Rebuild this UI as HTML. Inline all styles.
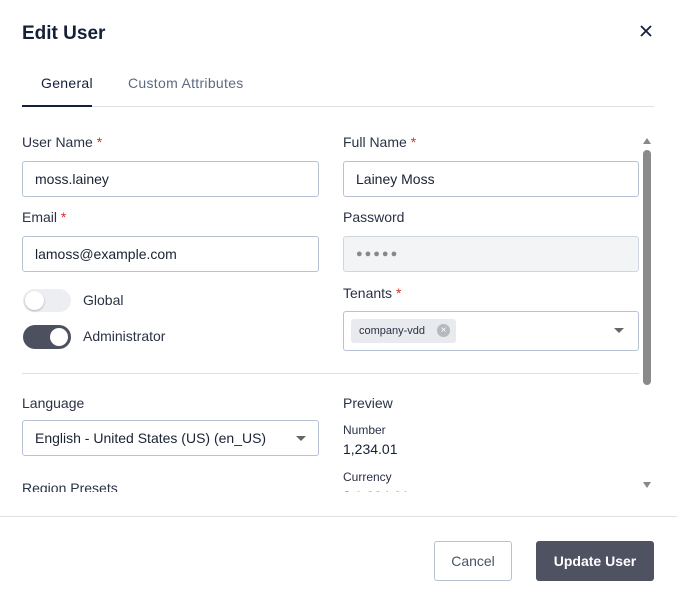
<!DOCTYPE html>
<html><head><style>
*{box-sizing:border-box;margin:0;padding:0}
body{width:677px;height:602px;background:#fff;font-family:"Liberation Sans",sans-serif;color:#1a2233;position:relative;overflow:hidden}
.a{position:absolute}
.lbl{font-size:14px;color:#2a3245}
.req{color:#d32f2f}
.inp{position:absolute;height:36px;border:1px solid #b7c3d3;border-radius:3px;font-size:14px;padding:0 12px;line-height:34px;color:#1a2233;background:#fff}
.caret{position:absolute;width:0;height:0;border-left:5px solid transparent;border-right:5px solid transparent;border-top:5px solid #666}
</style></head><body>
<div class="a" style="left:22px;top:23px;font-size:19px;font-weight:bold;color:#14203a">Edit User</div>
<svg class="a" style="left:640px;top:25px" width="12" height="12" viewBox="0 0 12 12"><path d="M1 1L11 11M11 1L1 11" stroke="#14203a" stroke-width="1.8"/></svg>
<div class="a" style="left:41px;top:75px;font-size:14px;color:#14203a;letter-spacing:0.3px">General</div>
<div class="a" style="left:128px;top:75px;font-size:14px;color:#5d6b80;letter-spacing:0.3px">Custom Attributes</div>
<div class="a" style="left:22px;top:106px;width:632px;height:1px;background:#dde1e6"></div>
<div class="a" style="left:22px;top:105px;width:70px;height:2px;background:#14203a"></div>

<div style="position:absolute;left:0;top:128px;width:677px;height:364px;overflow:hidden">
<div style="position:absolute;left:0;top:-128px;width:677px">
<div class="a lbl" style="left:22px;top:134px">User Name <span class="req">*</span></div>
<div class="a lbl" style="left:343px;top:134px">Full Name <span class="req">*</span></div>
<div class="inp" style="left:22px;top:161px;width:297px">moss.lainey</div>
<div class="inp" style="left:343px;top:161px;width:296px">Lainey Moss</div>
<div class="a lbl" style="left:22px;top:209px">Email <span class="req">*</span></div>
<div class="a lbl" style="left:343px;top:209px">Password</div>
<div class="inp" style="left:22px;top:236px;width:297px">lamoss@example.com</div>
<div class="inp" style="left:343px;top:236px;width:296px;background:#f2f4f6;border-color:#cfd6df;color:#888;font-size:11px;letter-spacing:2px">●●●●●</div>
<div class="a" style="left:23px;top:289px;width:48px;height:23px;border-radius:12px;background:#eceef1"></div>
<div class="a" style="left:25px;top:291px;width:19px;height:19px;border-radius:50%;background:#fff;box-shadow:0 1px 2px rgba(0,0,0,.25)"></div>
<div class="a lbl" style="left:83px;top:292px">Global</div>
<div class="a" style="left:23px;top:325px;width:48px;height:24px;border-radius:12px;background:#4d505e"></div>
<div class="a" style="left:50px;top:328px;width:18px;height:18px;border-radius:50%;background:#fff"></div>
<div class="a lbl" style="left:83px;top:328px">Administrator</div>
<div class="a lbl" style="left:343px;top:285px">Tenants <span class="req">*</span></div>
<div class="inp" style="left:343px;top:311px;width:296px;height:40px"></div>
<div class="a" style="left:351px;top:319px;width:105px;height:24px;background:#e8eaed;border-radius:3px;font-size:11px;line-height:24px;padding-left:8px;color:#2a3245">company-vdd</div>
<div class="a" style="left:437px;top:324px;width:13px;height:13px;border-radius:50%;background:#b5b9c0;color:#fff;font-size:10px;line-height:13px;text-align:center">×</div>
<div class="caret" style="left:614px;top:328px"></div>
<div class="a" style="left:22px;top:373px;width:617px;height:1px;background:#dde1e6"></div>
<div class="a lbl" style="left:22px;top:395px">Language</div>
<div class="inp" style="left:22px;top:420px;width:297px">English - United States (US) (en_US)</div>
<div class="caret" style="left:296px;top:436px"></div>
<div class="a lbl" style="left:22px;top:480px">Region Presets</div>
<div class="a lbl" style="left:343px;top:395px">Preview</div>
<div class="a" style="left:343px;top:423px;font-size:12px;color:#2a3245">Number</div>
<div class="a" style="left:343px;top:441px;font-size:14px;color:#14203a">1,234.01</div>
<div class="a" style="left:343px;top:470px;font-size:12px;color:#2a3245">Currency</div>
<div class="a" style="left:343px;top:488px;font-size:14px;color:#7a8090">$ 1,234.01</div>
</div></div>
<div class="a" style="left:643px;top:138px;width:0;height:0;border-left:4px solid transparent;border-right:4px solid transparent;border-bottom:6px solid #888"></div>
<div class="a" style="left:643px;top:150px;width:8px;height:235px;border-radius:4px;background:#8a8a8a"></div>
<div class="a" style="left:643px;top:482px;width:0;height:0;border-left:4px solid transparent;border-right:4px solid transparent;border-top:6px solid #888"></div>

<div class="a" style="left:0;top:516px;width:677px;height:1px;background:#dde1e6"></div>
<div class="a" style="left:434px;top:541px;width:78px;height:40px;border:1px solid #b7c3d3;border-radius:3px;font-size:14px;line-height:38px;text-align:center;color:#4a5568">Cancel</div>
<div class="a" style="left:536px;top:541px;width:118px;height:40px;background:#4f5260;border-radius:3px;font-size:14px;font-weight:bold;line-height:40px;text-align:center;color:#fff">Update User</div>
</body></html>
